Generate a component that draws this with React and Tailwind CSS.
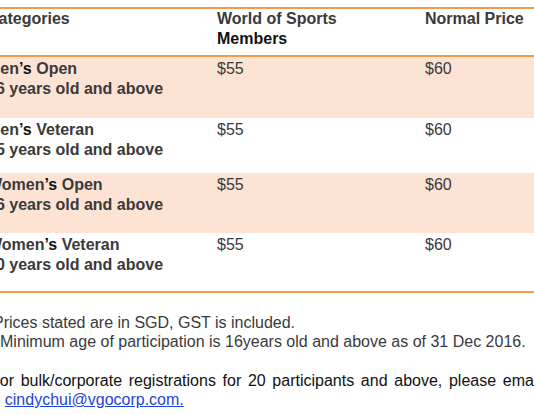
import React from "react";

const rows = [
  { name: "Men", tail: " Open", age: "16 years old and above", h: "h-[61px]", bg: "bg-[#fce3d3]" },
  { name: "Men", tail: " Veteran", age: "45 years old and above", h: "h-[55px]", bg: "bg-white" },
  { name: "Women", tail: " Open", age: "16 years old and above", h: "h-[60px]", bg: "bg-[#fce3d3]" },
  { name: "Women", tail: " Veteran", age: "40 years old and above", h: "h-[58px]", bg: "bg-white" },
];

export default function App() {
  return (
    <div className="w-[534px] h-[415px] overflow-hidden bg-white font-['Liberation_Sans',Arial,sans-serif] text-[16px] text-[#3a3a3a]">
      <div className="ml-[-10px] w-[551px] pt-[7px]">
        <div className="ml-[-3px] border-t-2 border-b-2 border-[#f39a4c]">
          <div className="grid grid-cols-[230px_208px_1fr] font-bold leading-[20px] pb-[6px] border-b-2 border-[#f39a4c]">
            <div>Categories</div>
            <div>
              World of Sports
              <br />
              <span className="text-[#111]">Members</span>
            </div>
            <div>Normal Price</div>
          </div>
          {rows.map((r, i) => (
            <div
              key={i}
              className={`grid grid-cols-[230px_208px_1fr] leading-[20px] pt-[2px] ${r.h} ${r.bg}`}
            >
              <div className="font-bold">
                {r.name}
                <span className="text-[#111]">’s</span>
                {r.tail}
                <br />
                {r.age}
              </div>
              <div>$55</div>
              <div>$60</div>
            </div>
          ))}
        </div>
        <div className="mt-[20px] leading-[19px]">
          <div className="pl-[3px]">Prices stated are in SGD, GST is included.</div>
          <div className="pl-[10px]">
            Minimum age of participation is 16years old and above as of 31 Dec 2016.
          </div>
          <p className="mt-[20px] ml-[-3px] w-[554px] indent-[3px] text-justify text-[#111]">
            For bulk/corporate registrations for 20 participants and above, please email to{"\u00a0"}
            <a href="#" className="text-[#1d44d8] underline">
              cindychui@vgocorp.com.
            </a>
          </p>
        </div>
      </div>
    </div>
  );
}
